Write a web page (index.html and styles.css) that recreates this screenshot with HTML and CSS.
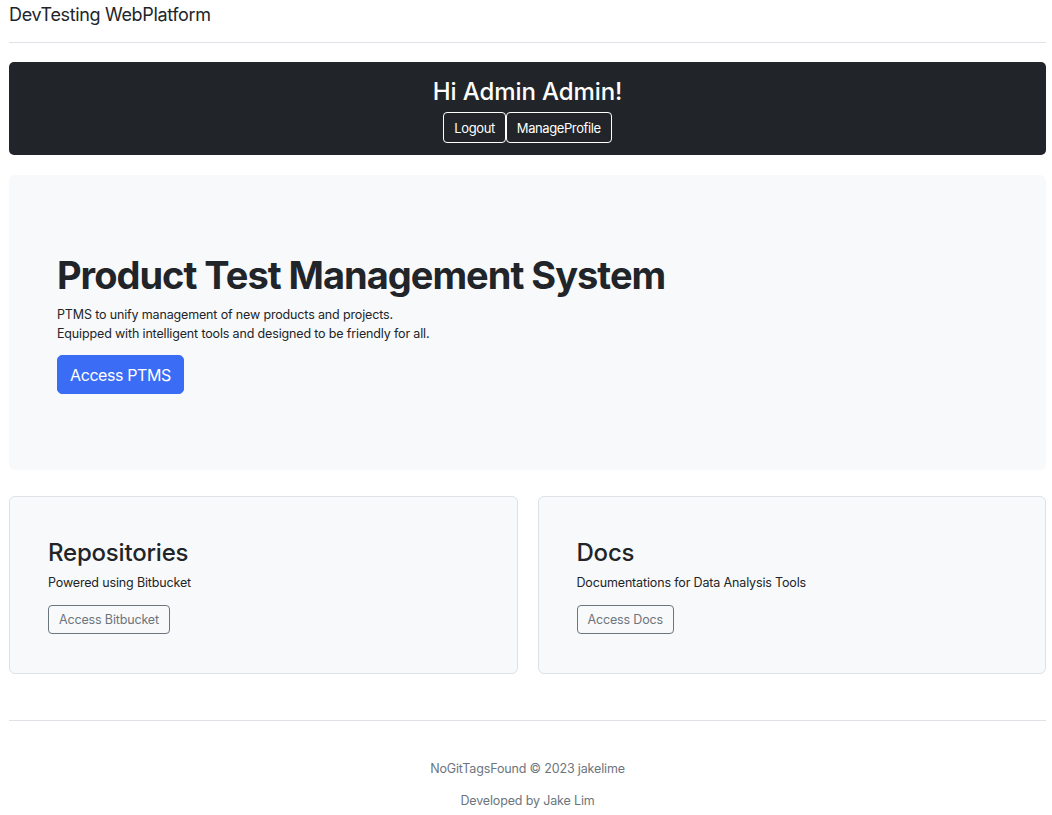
FILE: index.html
```html
<!DOCTYPE html>
<html lang="en">
<head>
<meta charset="utf-8">
<title>DevTesting WebPlatform</title>
<link rel="stylesheet" href="styles.css">
</head>
<body>
<div class="page">
  <header class="topbar">
    <span class="brand">DevTesting WebPlatform</span>
  </header>
  <section class="greeting">
    <h2 class="greeting-title">Hi Admin Admin!</h2>
    <div class="greeting-actions">
      <a class="btn btn-light-outline" href="#">Logout</a><a class="btn btn-light-outline" href="#">ManageProfile</a>
    </div>
  </section>
  <section class="hero">
    <h1 class="hero-title">Product Test Management System</h1>
    <p class="hero-text">PTMS to unify management of new products and projects.<br>Equipped with intelligent tools and designed to be friendly for all.</p>
    <a class="btn btn-primary" href="#">Access PTMS</a>
  </section>
  <section class="cards">
    <div class="card">
      <h2 class="card-title">Repositories</h2>
      <p class="card-text">Powered using Bitbucket</p>
      <a class="btn btn-secondary-outline" href="#">Access Bitbucket</a>
    </div>
    <div class="card">
      <h2 class="card-title">Docs</h2>
      <p class="card-text">Documentations for Data Analysis Tools</p>
      <a class="btn btn-secondary-outline" href="#">Access Docs</a>
    </div>
  </section>
  <footer class="footer">
    <p class="footer-line">NoGitTagsFound © 2023 jakelime</p>
    <p class="footer-line">Developed by Jake Lim</p>
  </footer>
</div>
</body>
</html>
```
FILE: styles.css
```css
* { box-sizing: border-box; }
html, body { margin: 0; padding: 0; background: #fff; }
body {
  font-family: Inter, "Liberation Sans", sans-serif;
  color: #212529;
  font-size: 12.5px;
  letter-spacing: -0.15px;
}
.page { padding: 0 6px 0 9px; }
a { text-decoration: none; }

.topbar {
  height: 43px;
  border-bottom: 1px solid #dee2e6;
  padding-top: 4px;
}
.brand { font-size: 18px; line-height: 22px; color: #212529; letter-spacing: -0.35px; }

.greeting {
  margin-top: 19px;
  background: #212529;
  border-radius: 5px;
  height: 93px;
  display: flex;
  flex-direction: column;
  align-items: center;
  padding-top: 15px;
}
.greeting-title {
  margin: 0;
  color: #fff;
  font-size: 24px;
  font-weight: 500;
  line-height: 29px;
  letter-spacing: -0.1px;
}
.greeting-actions { display: flex; margin-top: 6px; }

.btn {
  display: inline-flex;
  align-items: center;
  justify-content: center;
  border-radius: 4px;
  border: 1px solid transparent;
}
.btn-light-outline {
  color: #fff;
  border-color: #fff;
  height: 31px;
  padding: 0 10px;
  font-size: 13px;
  letter-spacing: -0.4px;
}
.btn-primary {
  background: #3b6cf6;
  border-color: #3b6cf6;
  color: #fff;
  height: 39px;
  padding: 0 12px;
  font-size: 16px;
  letter-spacing: -0.4px;
  border-radius: 5px;
}
.btn-secondary-outline {
  color: #6c757d;
  border-color: #6c757d;
  height: 29px;
  padding: 0 10px;
  font-size: 12.5px;
}

.hero {
  margin-top: 20px;
  background: #f8f9fa;
  border-radius: 6px;
  height: 295px;
  padding: 77px 48px 0;
}
.hero-title {
  margin: 0;
  font-size: 38px;
  font-weight: 700;
  line-height: 46px;
  letter-spacing: -1px;
}
.hero-text {
  margin: 7px 0 12px;
  line-height: 19px;
}

.cards {
  margin-top: 26px;
  display: grid;
  grid-template-columns: 1fr 1fr;
  gap: 20px;
}
.card {
  background: #f8f9fa;
  border: 1px solid #dee2e6;
  border-radius: 6px;
  height: 178px;
  padding: 39px 38px 0;
}
.card-title {
  margin: 0;
  font-size: 24px;
  font-weight: 500;
  line-height: 34px;
  letter-spacing: -0.2px;
}
.card-text { margin: 4px 0 13px; line-height: 18px; }

.footer {
  margin-top: 46px;
  border-top: 1px solid #dee2e6;
  padding-top: 38px;
  text-align: center;
  color: #6c757d;
}
.footer-line { margin: 0 0 13px; line-height: 19px; }
```
